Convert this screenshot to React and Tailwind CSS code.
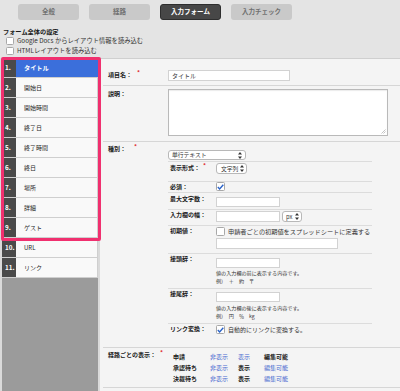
import React from "react";

function Arrows() {
  return (
    <svg width="4" height="7" viewBox="0 0 4 7">
      <path d="M2 0L4 2.6H0Z M2 7L0 4.4H4Z" fill="#333" />
    </svg>
  );
}

function CB({ checked, small }) {
  return (
    <div
      className={
        (small ? "w-[8px] h-[8px] " : "w-[9px] h-[9px] ") +
        "bg-white border border-[#a8a8a8] rounded-[1.5px] flex items-center justify-center shrink-0"
      }
    >
      {checked && (
        <svg width="7" height="6" viewBox="0 0 7 6">
          <path d="M0.8 3.1L2.6 4.9L6.3 0.7" stroke="#2a63c9" strokeWidth="1.4" fill="none" />
        </svg>
      )}
    </div>
  );
}

const Star = () => <span className="text-[#e0282e] text-[6px] leading-[6px] relative top-[-2px]">*</span>;

const items = ["タイトル", "開始日", "開始時間", "終了日", "終了時間", "終日", "場所", "詳細", "ゲスト", "URL", "リンク"];

export default function App() {
  return (
    <div className="relative w-[400px] h-[391px] overflow-hidden bg-[#e4e4e4] text-[#222] font-['Noto_Sans_CJK_JP','Noto_Sans',sans-serif]">
      {/* top area */}
      <div className="h-[58px]">
        <div className="flex pt-[4px] pl-[18px] gap-[10px]">
          <div className="w-[61px] h-[16px] rounded-[3px] bg-[#c9c9c9] flex items-center justify-center text-[6.5px] font-bold text-[#707070]">全般</div>
          <div className="w-[61px] h-[16px] rounded-[3px] bg-[#c9c9c9] flex items-center justify-center text-[6.5px] font-bold text-[#707070]">経路</div>
          <div className="w-[61px] h-[16px] rounded-[3px] bg-[#474747] border border-[#2e2e2e] flex items-center justify-center text-[6.5px] font-bold text-white">入力フォーム</div>
          <div className="w-[61px] h-[16px] rounded-[3px] bg-[#c9c9c9] flex items-center justify-center text-[6.5px] font-bold text-[#707070]">入力チェック</div>
        </div>
        <div className="mt-[8px] pl-[3px] text-[6.2px] leading-[8px] font-bold text-[#1a1a1a]">フォーム全体の設定</div>
        <div className="flex items-center h-[10px] pl-[6px] gap-[3px] text-[6.3px] text-[#333]">
          <CB small />
          <span>Google Docs からレイアウト情報を読み込む</span>
        </div>
        <div className="flex items-center h-[10px] pl-[6px] gap-[3px] text-[6.3px] text-[#333]">
          <CB small />
          <span>HTMLレイアウトを読み込む</span>
        </div>
      </div>

      <div className="flex h-[333px]">
        {/* sidebar */}
        <div className="w-[100px] flex flex-col bg-[#dadada] pl-[2px] pr-[2px]">
          {items.map((t, i) => (
            <div key={i} className="flex h-[20px] border-b border-[#cfcfcf]">
              <div className="w-[14px] bg-[#4a4a4a] text-white text-[6.3px] font-bold flex items-center pl-[3px]">{i + 1}.</div>
              <div
                className={
                  i === 0
                    ? "flex-1 bg-[#3b6fdb] text-white font-bold text-[6.2px] flex items-center pl-[8px]"
                    : "flex-1 bg-[#f9f9f9] text-[#1f1f1f] text-[6px] flex items-center pl-[8px] border-r border-[#cfcfcf]"
                }
              >
                {t}
              </div>
            </div>
          ))}
          <div className="flex-1 bg-[#9b9b9b]" />
        </div>

        {/* main panel */}
        <div className="flex-1 bg-[#f4f4f4] border-t border-[#cfcfcf] text-[6px] leading-[8px]">
          <div className="ml-[3px]">
            {/* row 1 */}
            <div className="flex h-[27px] border-b border-[#d6d6d6]">
              <div className="w-[65px] pl-[5px] pt-[12px] font-bold text-[#1a1a1a]">
                項目名：<span className="ml-[5px]"><Star /></span>
              </div>
              <div className="pt-[11px]">
                <div className="w-[122px] h-[11px] bg-white border border-[#d2d2d2] flex items-center pl-[3px] text-[6px] text-[#333]">タイトル</div>
              </div>
            </div>
            {/* row 2 */}
            <div className="flex h-[56px] border-b border-[#d6d6d6]">
              <div className="w-[65px] pl-[5px] pt-[4px] font-bold text-[#1a1a1a]">説明：</div>
              <div className="pt-[3px]">
                <div className="relative w-[220px] h-[47px] bg-white border border-[#b9b9b9] shadow-[inset_0_1px_1px_rgba(0,0,0,0.08)]">
                  <svg className="absolute right-[1px] bottom-[1px]" width="5" height="5" viewBox="0 0 5 5">
                    <path d="M4.5 0.5L0.5 4.5 M4.5 2.5L2.5 4.5" stroke="#aaa" strokeWidth="0.7" />
                  </svg>
                </div>
              </div>
            </div>
            {/* row 3 */}
            <div className="flex h-[206px] border-b border-[#d6d6d6]">
              <div className="w-[65px] pl-[5px] pt-[3px] font-bold text-[#1a1a1a]">
                種別：<span className="ml-[8px]"><Star /></span>
              </div>
              <div className="pt-[8px] w-[204px]">
                <div className="h-[12px] border-b border-[#dcdcdc]">
                  <div className="w-[78px] h-[10px] bg-white border border-[#b8b8b8] rounded-[3px] flex items-center justify-between px-[3px] text-[5.8px] text-[#333]">
                    <span>単行テキスト</span>
                    <Arrows />
                  </div>
                </div>
                {/* 表示形式 */}
                <div className="flex h-[20px] border-b border-[#dcdcdc]">
                  <div className="w-[48px] pl-[2px] pt-[2px] font-bold text-[#1a1a1a]">
                    表示形式：<span className="ml-[3px]"><Star /></span>
                  </div>
                  <div className="pt-[1px]">
                    <div className="w-[31px] h-[11px] bg-white border border-[#b8b8b8] rounded-[3px] flex items-center justify-between pl-[4px] pr-[2px] text-[5.8px] text-[#333]">
                      <span>文字列</span>
                      <Arrows />
                    </div>
                  </div>
                </div>
                {/* 必須 */}
                <div className="flex h-[11px] border-b border-[#dcdcdc]">
                  <div className="w-[48px] pl-[2px] pt-[1px] font-bold text-[#1a1a1a]">必須：</div>
                  <div>
                    <CB checked />
                  </div>
                </div>
                {/* 最大文字数 */}
                <div className="flex h-[17px] border-b border-[#dcdcdc]">
                  <div className="w-[48px] pl-[2px] pt-[2px] font-bold text-[#1a1a1a]">最大文字数：</div>
                  <div className="pt-[4px]">
                    <div className="w-[64px] h-[10px] bg-white border border-[#d2d2d2]" />
                  </div>
                </div>
                {/* 入力欄の幅 */}
                <div className="flex h-[16px] border-b border-[#dcdcdc]">
                  <div className="w-[48px] pl-[2px] pt-[1px] font-bold text-[#1a1a1a]">入力欄の幅：</div>
                  <div className="pt-[1px] flex gap-[2px]">
                    <div className="w-[64px] h-[11px] bg-white border border-[#d2d2d2]" />
                    <div className="w-[20px] h-[11px] bg-white border border-[#b8b8b8] rounded-[3px] flex items-center justify-between pl-[3px] pr-[2px] text-[5.8px] text-[#333]">
                      <span>px</span>
                      <Arrows />
                    </div>
                  </div>
                </div>
                {/* 初期値 */}
                <div className="flex h-[28px] border-b border-[#dcdcdc]">
                  <div className="w-[48px] pl-[2px] pt-[1px] font-bold text-[#1a1a1a]">初期値：</div>
                  <div className="pt-[1px]">
                    <div className="flex items-center gap-[3px] h-[9px]">
                      <CB />
                      <span className="text-[6.2px] text-[#333]">申請者ごとの初期値をスプレッドシートに定義する</span>
                    </div>
                    <div className="mt-[2px] w-[122px] h-[11px] bg-white border border-[#d2d2d2]" />
                  </div>
                </div>
                {/* 接頭辞 */}
                <div className="flex h-[35px] border-b border-[#dcdcdc]">
                  <div className="w-[48px] pl-[2px] pt-[1px] font-bold text-[#1a1a1a]">接頭辞：</div>
                  <div className="pt-[4px]">
                    <div className="w-[64px] h-[10px] bg-white border border-[#d2d2d2]" />
                    <div className="mt-[1px] text-[5.1px] leading-[8px] text-[#333]">値の入力欄の前に表示する内容です。</div>
                    <div className="text-[5.1px] leading-[8px] text-[#333]">例）　＋　約　〒</div>
                  </div>
                </div>
                {/* 接尾辞 */}
                <div className="flex h-[35px] border-b border-[#dcdcdc]">
                  <div className="w-[48px] pl-[2px] pt-[1px] font-bold text-[#1a1a1a]">接尾辞：</div>
                  <div className="pt-[3px]">
                    <div className="w-[64px] h-[10px] bg-white border border-[#d2d2d2]" />
                    <div className="mt-[2px] text-[5.1px] leading-[8px] text-[#333]">値の入力欄の後に表示する内容です。</div>
                    <div className="text-[5.1px] leading-[8px] text-[#333]">例）　円　％　kg</div>
                  </div>
                </div>
                {/* リンク変換 */}
                <div className="flex">
                  <div className="w-[48px] pl-[2px] pt-[1px] font-bold text-[#1a1a1a]">リンク変換：</div>
                  <div className="pt-[1px] flex items-center gap-[3px] h-[10px]">
                    <CB checked />
                    <span className="text-[6px] text-[#333]">自動的にリンクに変換する。</span>
                  </div>
                </div>
              </div>
            </div>
            {/* row 4 */}
            <div className="flex h-[40px] border-b border-[#d6d6d6]">
              <div className="w-[65px] pl-[5px] pt-[3px] font-bold text-[#1a1a1a]">
                経路ごとの表示：<span className="ml-[4px]"><Star /></span>
              </div>
              <div className="pt-[3px] pl-[5px] leading-[11px] text-[6px]">
                <div className="flex">
                  <span className="w-[37px] font-bold text-[#1a1a1a]">申請</span>
                  <span className="w-[28px] text-[#4a6bd0]">非表示</span>
                  <span className="w-[26px] text-[#4a6bd0]">表示</span>
                  <span className="font-bold text-[#1a1a1a]">編集可能</span>
                </div>
                <div className="flex">
                  <span className="w-[37px] font-bold text-[#1a1a1a]">承認待ち</span>
                  <span className="w-[28px] text-[#4a6bd0]">非表示</span>
                  <span className="w-[26px] font-bold text-[#1a1a1a]">表示</span>
                  <span className="text-[#4a6bd0]">編集可能</span>
                </div>
                <div className="flex">
                  <span className="w-[37px] font-bold text-[#1a1a1a]">決裁待ち</span>
                  <span className="w-[28px] text-[#4a6bd0]">非表示</span>
                  <span className="w-[26px] font-bold text-[#1a1a1a]">表示</span>
                  <span className="text-[#4a6bd0]">編集可能</span>
                </div>
              </div>
            </div>
          </div>
        </div>
      </div>

      {/* annotation highlight */}
      <div className="absolute left-[1px] top-[57px] w-[100px] h-[184px] border-[3px] border-[#f0306f] rounded-[2px] pointer-events-none" />
    </div>
  );
}
